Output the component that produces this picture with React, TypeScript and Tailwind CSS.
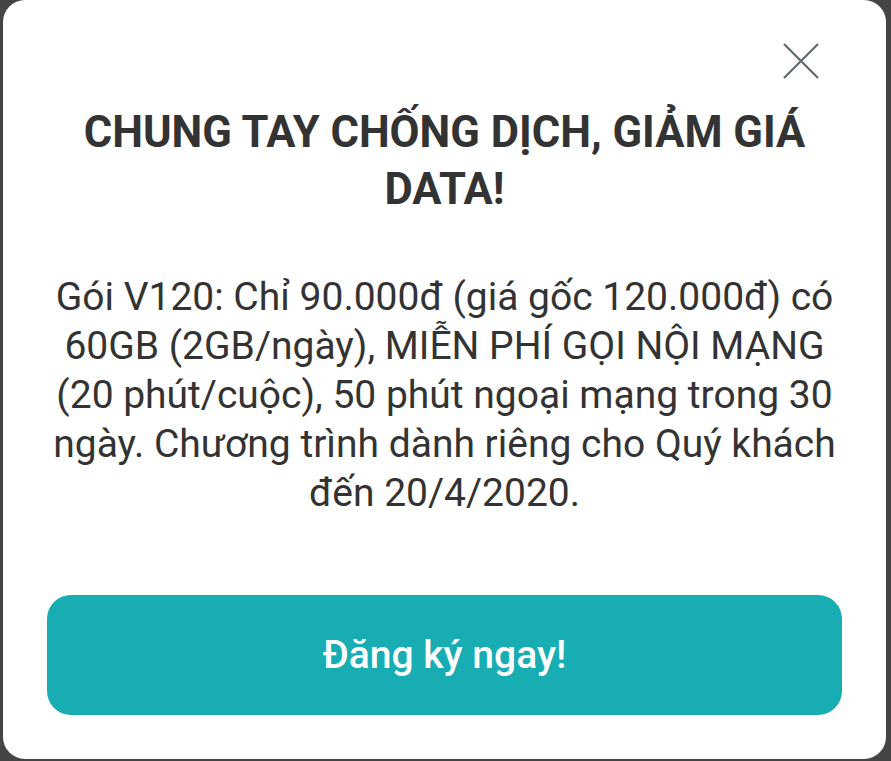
import React from 'react';

export default function App() {
    return (
        <div className="w-[891px] h-[761px] bg-[#454545] pl-[3px] pr-[5px] pb-[2px] font-['Roboto',sans-serif]">
            <div className="relative h-full w-full rounded-[22px] bg-white px-[44px] pt-[104px]">
                {/* close */}
                <button className="absolute right-[66px] top-[42px] w-[38px] h-[38px] flex items-center justify-center">
                    <svg width="38" height="38" viewBox="0 0 38 38" fill="none">
                        <path d="M2 2L36 36M36 2L2 36" stroke="#5f6b70" strokeWidth="2.2" />
                    </svg>
                </button>

                <h1 className="-mx-[20px] text-center text-[43.5px] leading-[57px] font-bold text-[#333333]">
                    CHUNG TAY CHỐNG DỊCH, GIẢM GIÁ<br />DATA!
                </h1>

                <p className="-mx-[20px] mt-[55px] text-center text-[39px] leading-[49px] text-[#333333] whitespace-nowrap">
                    Gói V120: Chỉ 90.000đ (giá gốc 120.000đ) có<br />
                    60GB (2GB/ngày), MIỄN PHÍ GỌI NỘI MẠNG<br />
                    (20 phút/cuộc), 50 phút ngoại mạng trong 30<br />
                    ngày. Chương trình dành riêng cho Quý khách<br />
                    đến 20/4/2020.
                </p>

                <button className="mt-[77px] w-full h-[120px] rounded-[24px] bg-[#17adb2] text-white text-[39px] font-medium">
                    Đăng ký ngay!
                </button>
            </div>
        </div>
    );
}
